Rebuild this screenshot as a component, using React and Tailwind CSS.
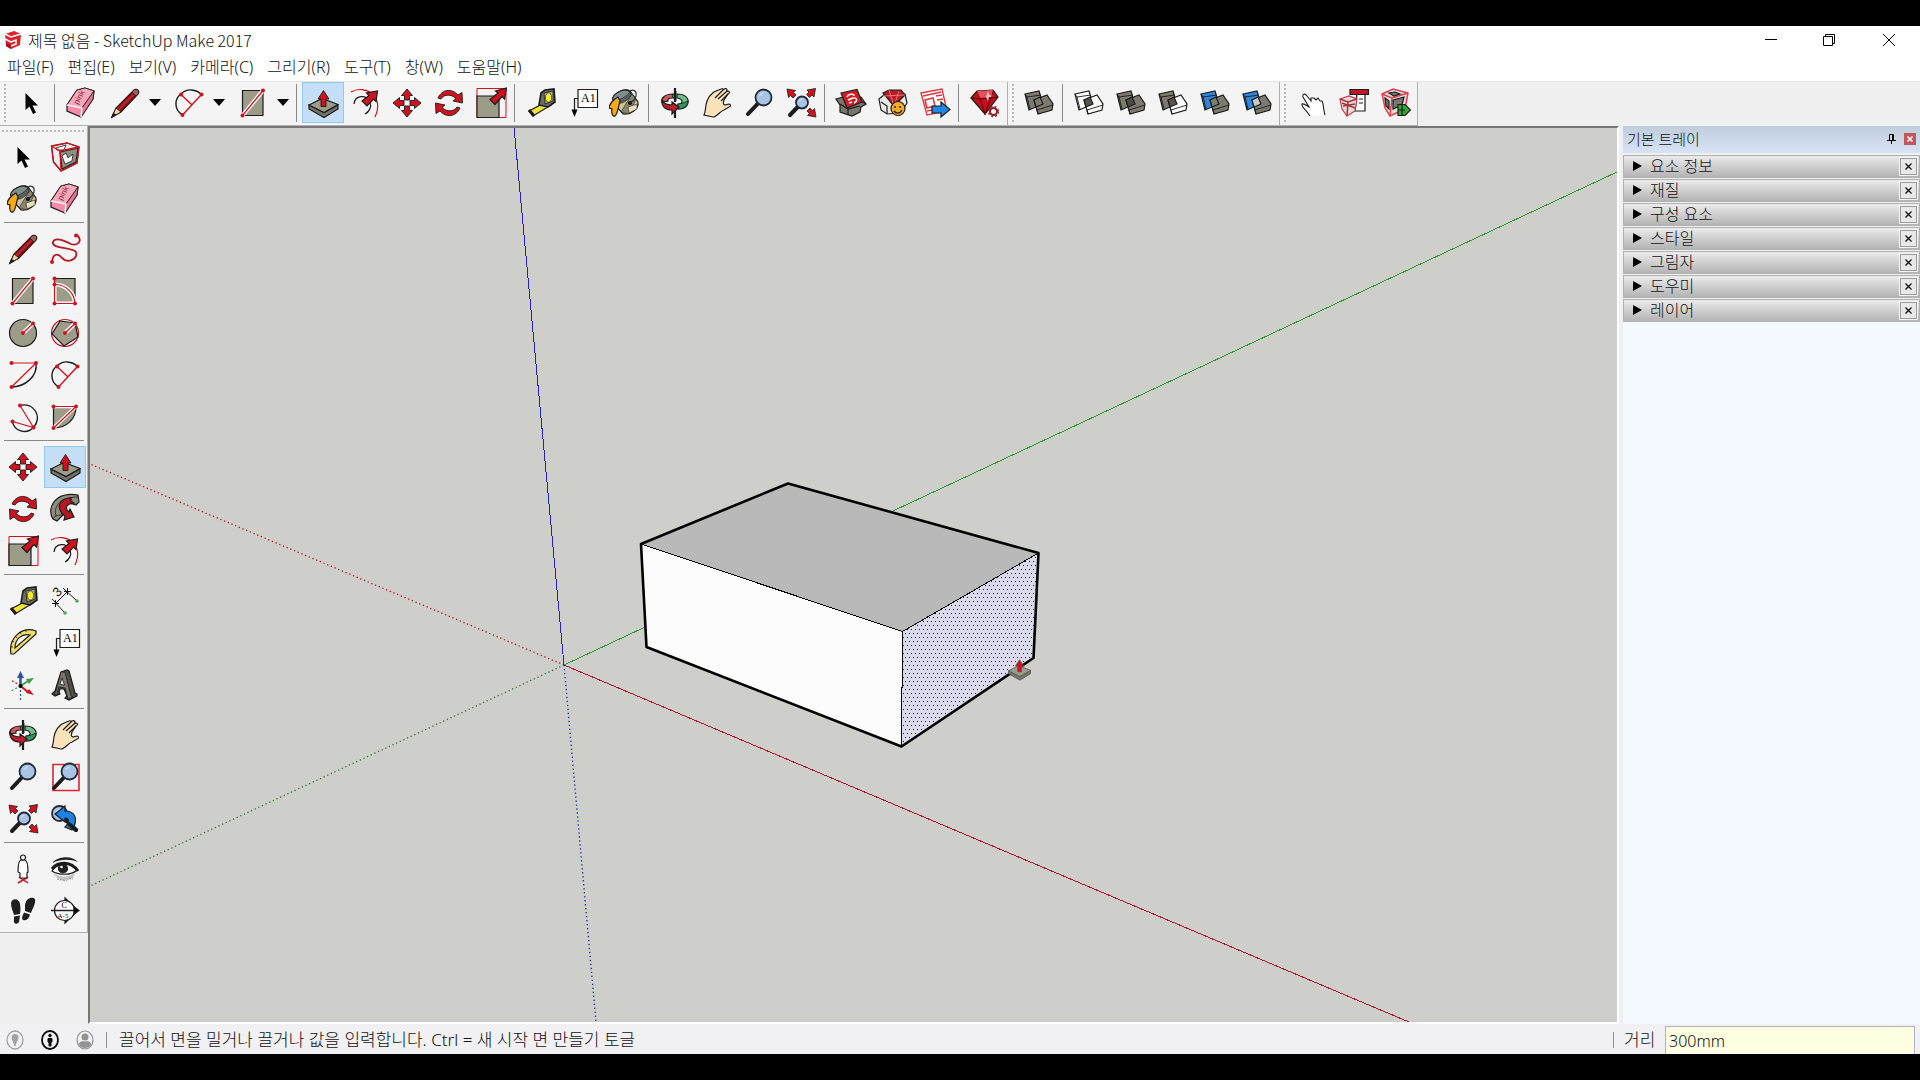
import clsx from 'clsx';

const RED = '#d0121f';
const GRAY = '#9c9c88';
const DARK = '#1c1c1c';

const Svg = ({ children }) => (
  <svg width="32" height="32" viewBox="0 0 32 32" fill="none" stroke={DARK} strokeWidth="1.2" aria-hidden="true" className="shrink-0">
    {children}
  </svg>
);

// Red end points shared by the drawing tools
const Dots = ({ at }) => at.map(([x, y]) => <circle key={`${x}-${y}`} cx={x} cy={y} r="2" fill={RED} stroke="none" />);

const SelectIcon = () => (
  <Svg>
    <path d="M10.5 6V23L14.5 19.5 18 27 21 25.5 17.5 18.5H23Z" fill="#000" stroke="none" />
  </Svg>
);

const ComponentIcon = () => (
  <Svg>
    <path d="M2.5 5 18 2 30 6 28 22 12 30 4.500 21Z" fill="#ececea" />
    <path d="M11 11 29 7 27 21 13 28Z" fill="#8d8d80" />
    <path d="M7 7 17 4 15 9 8 9ZM13 15l4-3 2 5 5-4-1 7-7 3Z" fill="#fff" strokeWidth=".8" />
    <g stroke={RED} strokeWidth="1.3">
      <path d="M2.500 5 18 2 30 6 28 22 12 30 4.500 21ZM2.500 5 11 10 30 6M11 10 12 30" />
    </g>
  </Svg>
);

const BucketIcon = () => (
  <Svg>
    <path d="M4 12C6 5 16 1 21 4L29 15C30 22 22 28 14 27L8 20Z" fill="#cfc3a0" />
    <path d="M12 25 23 7 27 12 20 27Z" fill="#8b8470" strokeWidth=".6" />
    <path d="M19 20 28 17 28 22 20 26Z" fill="#eadfba" strokeWidth=".6" />
    <ellipse cx="12.500" cy="9" rx="9.500" ry="5" transform="rotate(-24 12.500 9)" fill="#7f8e8a" />
    <path d="M5 13C10 14 17 10 21 5L22 8C19 14 12 18 6 16Z" fill="#55605f" strokeWidth=".6" />
    <path d="M20 5C24 1 28 4 27 9 26 13 23 15 21 15" stroke="#333" />
    <path d="M9 10C5 12 0 17 0 21L3 22C2 27 4 30 6 29 9 27 9 20 11 14Z" fill="#f8a915" />
    <circle cx="21" cy="16" r="1.500" fill="#222" />
  </Svg>
);

const EraserIcon = () => (
  <Svg>
    <path d="M12 3 20 1 29 4 28 12 16 30 2 24 2 18Z" fill="#f78aa5" />
    <path d="M2 18 12 3 20 1 29 4 17 21Z" fill="#f9a9bb" strokeWidth=".8" />
    <path d="M17 21 29 4 28 12 16 30Z" fill="#ee7593" strokeWidth=".8" />
    <path d="M2 18 17 21 16 30" stroke="#fff" strokeWidth="1.500" />
    <text x="13" y="18" fontSize="8" fill="#7a2338" stroke="none" transform="rotate(-62 13 18)" fontFamily="Liberation Sans">pink</text>
  </Svg>
);

const PencilIcon = () => (
  <Svg>
    <path d="M3 30 7 21 25 3C28 1 31 4 29 7L12 25Z" fill="#c01c25" />
    <path d="M3 30 7 21 12 25Z" fill="#ecd3a0" strokeWidth=".8" />
    <path d="M3 30 4.500 26.500 6.500 28Z" fill="#000" />
    <path d="M9 20 24 5M11 24 28 7" stroke="#68100f" />
    <path d="M23 5 25 3C28 1 31 4 29 7L27 9Z" fill="#a0605c" strokeWidth=".8" />
  </Svg>
);

const FreehandIcon = () => (
  <Svg>
    <path d="M28 2C35 9 27 13 22 11 14 7 6 4 4 9 2 16 24 14 27 19 29 26 19 31 13 25 9 20 4 20 3 29" stroke="#b41a26" strokeWidth="1.800" />
    <Dots at={[[27, 2.500], [3, 29]]} />
  </Svg>
);

const RectIcon = () => (
  <Svg>
    <path d="M5.500 3.500H26V28.500H5.500Z" fill={GRAY} />
    <path d="M5.500 28.500 26 3.500" stroke="#fff" strokeWidth="4" />
    <path d="M5.500 28.500 26 3.500" stroke={RED} />
    <Dots at={[[5.500, 28.500], [26, 3.500]]} />
  </Svg>
);

const RotRectIcon = () => (
  <Svg>
    <path d="M5.500 3.500H26V28.500H5.500Z" fill={GRAY} />
    <path d="M5.500 9.500C17 9.500 25.500 18 26 28.500H5.500Z" stroke="#fff" strokeWidth="4" />
    <path d="M5.500 3.500V28.500H26C25.500 18 17 9.500 5.500 9.500" stroke={RED} />
    <Dots at={[[5.500, 3.500], [5.500, 9.500], [5.500, 28.500], [26, 28.500]]} />
  </Svg>
);

const CircleIcon = () => (
  <Svg>
    <circle cx="16" cy="16" r="13.500" fill={GRAY} />
    <path d="M16 16 26 6.500" stroke="#fff" strokeWidth="4" />
    <path d="M16 16 26 6.500" stroke={RED} />
    <Dots at={[[16, 16], [26, 6.500]]} />
  </Svg>
);

const PolygonIcon = () => (
  <Svg>
    <circle cx="16" cy="16" r="13.500" stroke={RED} />
    <path d="M11 4 26 6 29 20 15 29 3 17Z" fill={GRAY} />
    <path d="M16 16 26 6.500" stroke="#fff" strokeWidth="4" />
    <path d="M16 16 26 6.500" stroke={RED} />
    <Dots at={[[16, 16], [26, 6.500]]} />
  </Svg>
);

const ArcIcon = () => (
  <Svg>
    <path d="M29 4C31 17 18 28 4.500 28" strokeWidth="1.400" />
    <path d="M4.500 28 29 4H4.500" stroke={RED} />
    <Dots at={[[4.500, 4], [29, 4], [4.500, 28]]} />
  </Svg>
);

const TwoPointArcIcon = () => (
  <Svg>
    <path d="M9.500 28C0 22 2 11 8 7 14 1 23 2 28.500 7.500" strokeWidth="1.400" />
    <path d="M9.500 28 28.500 7.500M8 7.500 18.500 17.500" stroke={RED} strokeWidth="1.400" />
    <Dots at={[[8, 7.500], [28.500, 7.500], [9.500, 28]]} />
  </Svg>
);

const ThreePointArcIcon = () => (
  <Svg>
    <path d="M13 4.500C27 1 36 16 26.500 26.500 19 34 7 30 5.500 20.500" strokeWidth="1.400" />
    <path d="M13 4.500 26.500 26.500 5.500 20.500" stroke={RED} />
    <Dots at={[[13, 4.500], [26.500, 26.500], [5.500, 20.500]]} />
  </Svg>
);

const PieIcon = () => (
  <Svg>
    <path d="M4.500 5.500H27C27 18 18 27 4.500 27Z" fill={GRAY} />
    <path d="M4.500 27 27 5.500H4.500" stroke="#fff" strokeWidth="3.500" />
    <path d="M4.500 27 27 5.500H4.500" stroke={RED} />
    <Dots at={[[4.500, 5.500], [27, 5.500], [4.500, 27]]} />
  </Svg>
);

const MoveIcon = () => (
  <Svg>
    {[0, 90, 180, 270].map((deg) => (
      <path key={deg} d="M16 2 21.500 8.500H18.500V13H13.500V8.500H10.500Z" fill={RED} strokeWidth=".9" transform={`rotate(${deg} 16 16)`} />
    ))}
  </Svg>
);

const Slab = () => (
  <>
    <path d="M2 18 17 25.500 31 18V22L17 30.500 2 22Z" fill="#74746a" />
    <path d="M2 18 15 11.500 31 17.500 17 25.500Z" fill={GRAY} />
    <path d="M16.500 3.500 22 12H19V19.500H14V12H11Z" fill={RED} strokeWidth=".9" />
  </>
);

const PushPullIcon = () => (
  <Svg>
    <Slab />
  </Svg>
);

const RotateIcon = () => (
  <Svg>
    {[0, 180].map((deg) => (
      <path key={deg} d="M5 11C9 2 19 1 25 8L29 5.500 29.500 16 20 14 23 11.500C17 6 10 8 8 12Z" fill={RED} strokeWidth=".9" transform={`rotate(${deg} 16 16)`} />
    ))}
  </Svg>
);

const FollowMeIcon = () => (
  <Svg>
    <path d="M4 26C0 20 1 11 9 5 15 1 23 1 29 2L30 9 27 12C18 8 12 12 12 17L14 22 8 28Z" fill="#8d8d80" />
    <path d="M4 26C6 22 10 22 14 22M7 23C4 13 12 4 29 4" strokeWidth=".8" />
    <path d="M22 5C12 5 9 11 11 17 12 20 14 22 16 23L15 27 25 24 21 16 20 19C16 16 16 11 25 10L22 8Z" fill="#b81820" />
  </Svg>
);

const ScaleIcon = () => (
  <Svg>
    <path d="M2 1.500H31V30.500H2Z" stroke={RED} strokeWidth="1" />
    <path d="M2 9H24V30.500H2Z" fill={GRAY} />
    <path d="M31.500 1 29.500 12 27 9.500 20 17.500 15 12.500 23 6 20.500 4Z" fill={RED} />
  </Svg>
);

const OffsetIcon = () => (
  <Svg>
    <path d="M2 5C16-3 36 9 26 30" stroke={RED} />
    <path d="M5 17C6 8 17 7 21 15 23 20 20 25 16 27" />
    <path d="M28.500 4 27 14.500 24.500 12 18 19 13 14 20 8.500 17.500 6Z" fill={RED} />
  </Svg>
);

const TapeIcon = () => (
  <Svg>
    <path d="M21 15 26 18 8 29 4 24Z" fill="#f1e233" />
    <path d="M4 23 9 29" strokeWidth="3" />
    <path d="M16 6 20 3 29 2 30 15 23 20 14 18Z" fill="#6d6d62" strokeWidth="1.600" />
    <path d="M19 6 28 4 28 14 20 17Z" fill="#aaa99c" strokeWidth=".8" />
    <ellipse cx="23.500" cy="10.500" rx="3" ry="4.500" fill="#f5ec2e" strokeWidth=".6" />
  </Svg>
);

const DimensionIcon = () => (
  <Svg>
    <path d="M6.500 18.500 18.500 6.500M14 3 28 16M3 14 16 28M3 18.500H10M6.500 15V22M15 6.500H22M18.500 3V10" strokeWidth="1" />
    <text x="6" y="12" fontSize="13" fill={DARK} stroke="none" transform="rotate(-45 8 9)" fontFamily="Liberation Sans">3</text>
    <circle cx="28" cy="16" r="1.800" fill="#53a953" stroke="none" />
    <circle cx="16" cy="28" r="1.800" fill="#53a953" stroke="none" />
  </Svg>
);

const ProtractorIcon = () => (
  <Svg>
    <path d="M29 4C15-1 1 11 4 27L7 27 29 7Z" fill="#f0dd62" />
    <path d="M23 8C15 6 8 12 8 21Z" fill="#f3f3f3" />
    <path d="M19 3 19 5M13 5 14 7M8 9 10 11M5 14 7 15M4 20H6" strokeWidth=".8" />
  </Svg>
);

const TextIcon = () => (
  <Svg>
    <path d="M11 2.500H30.500V20.500H11Z" fill="#fff" />
    <path d="M11 11.500H7.500V24" />
    <path d="M4.500 22.500H10.500L7.500 30Z" fill="#000" stroke="none" />
    <text x="14" y="15" fontSize="12" fill="#000" stroke="none" fontFamily="Liberation Serif">A1</text>
  </Svg>
);

const AxesIcon = () => (
  <Svg>
    <path d="M13.500 17V31" stroke="#2c53a6" strokeDasharray="2 2" />
    <path d="M13.500 17 4 22" stroke="#3f9c4a" strokeDasharray="2 2" />
    <path d="M13.500 17 4 11" stroke={RED} strokeDasharray="2 2" />
    <path d="M13.500 17V8" stroke="#2c53a6" strokeWidth="2.500" />
    <path d="M13.500 2 17 9H10Z" fill="#2c53a6" stroke="none" />
    <path d="M13.500 17 21 12" stroke="#3f9c4a" strokeWidth="2" />
    <path d="M27 9 22 15 19 10Z" fill="#3f9c4a" stroke="none" />
    <path d="M13.500 17 21 23" stroke={RED} strokeWidth="2" />
    <path d="M27 26 19 24 22 20Z" fill={RED} stroke="none" />
    <circle cx="13.500" cy="17" r="2" fill="#000" stroke="none" />
  </Svg>
);

const Text3dIcon = () => (
  <Svg>
    <path d="M12 3 18 1 20 2 26 24 28 25 28 27 20 31 16 29 18 27 15 20H11L10 23 11 25 6 27 3 25 6 22Z" fill="#4d4d49" />
    <path d="M12 3 16 3 22 27 24 28 19 30 18 26 16 19 10 18 8 24 9 25 5 26 7 22Z" fill="#77776f" strokeWidth=".8" />
    <path d="M13 9 15.500 16 11 15.500Z" fill="#f3f3f3" strokeWidth=".8" />
  </Svg>
);

const OrbitIcon = () => (
  <Svg>
    <path d="M14 7C6 7 2 11 3 15L9 14C8 12 10 11 14 11Z" fill="#d05660" />
    <path d="M17 4 17 14 13 9Z" fill="#3c9f5e" strokeWidth=".8" />
    <path d="M18 7C26 7 30 11 29 16 28 20 24 22 19 22V17C24 17 25 12 18 11Z" fill="#6bc08a" />
    <path d="M29 14C29 19 24 22 19 22V17C23 17 26 15 29 14Z" fill="#2f9757" strokeWidth=".8" />
    <path d="M3 12C3 16 8 18 13 18V15L20 20 13 27V23C7 23 2 20 3 12Z" fill="#c31c2b" />
    <path d="M16 1V15M16 24V31" strokeWidth="2.200" />
  </Svg>
);

const PanIcon = () => (
  <Svg>
    <path
      d="M3 28C5 24 4 20 6 14 8 8 11 7 13 5L20 2C22 1 23 3 21 4L23 2C26 1 27 3 25 5L27 4C29 4 29 6 27 7L23 13C22 17 22 17 24 18L28 17C30 17 30 20 28 20L23 23C19 24 16 30 12 30Z"
      fill="#fbe2b9"
    />
    <path d="M21 4 14 11M25 5 17 12M27 7 20 14" />
  </Svg>
);

const Lens = ({ cx, cy, r, hx, hy }) => (
  <>
    <path d={`M${cx} ${cy}L${hx} ${hy}`} stroke="#1d1d1d" strokeWidth="4" strokeLinecap="round" />
    <circle cx={cx} cy={cy} r={r} fill="#a9c3e4" stroke="#202938" strokeWidth="1.800" />
    <path d={`M${cx - r / 2} ${cy - r / 4}L${cx} ${cy - r / 1.6}`} stroke="#cfdef2" strokeWidth="1.500" />
  </>
);

const ZoomIcon = () => (
  <Svg>
    <Lens cx={20.5} cy={10.5} r={8} hx={5} hy={27} />
  </Svg>
);

const ZoomWindowIcon = () => (
  <Svg>
    <path d="M4 3.500H30V29.500H4Z" stroke="#de2630" strokeWidth="1.600" />
    <Lens cx={20.5} cy={10.5} r={8} hx={5} hy={27} />
  </Svg>
);

const ExtentsIcon = () => (
  <Svg>
    {[0, 90, 180].map((deg) => (
      <path key={deg} d="M2 2 10.500 3.500 8.500 5.500 11 8 8 11 5.500 8.500 3.500 10.500Z" fill={RED} strokeWidth=".8" transform={`rotate(${deg} 16.500 16)`} />
    ))}
    <Lens cx={17} cy={15.5} r={6} hx={5} hy={28} />
  </Svg>
);

const PreviousIcon = () => (
  <Svg>
    <Lens cx={10.5} cy={10.5} r={7.5} hx={27} hy={27} />
    <path d="M6 11 16 3V8C26 8 30 16 23 27L16 24C21 19 20 15 16 15V19Z" fill="#1a82e2" />
    <path d="M20 21 27 27" strokeWidth="4" strokeLinecap="round" />
  </Svg>
);

const PersonIcon = () => (
  <Svg>
    <path d="M12 24 21 30M21 24 11 30" stroke={RED} strokeWidth="1.500" />
    <path d="M14 7C11 8 11 14 11 19L13 20V25H20V20L21 19C21 14 21 8 18 7Z" fill="#fff" />
    <circle cx="16" cy="4.500" r="2.500" fill="#fff" />
  </Svg>
);

const EyeIcon = () => (
  <Svg>
    <path d="M4 20C10 25 22 25 27 18L24 25C18 29 8 28 4 20Z" fill="#c4c4c4" stroke="none" />
    <path d="M3 10C9 3 23 2 29 9 21 6 12 6 3 10Z" fill="#222" stroke="none" />
    <path d="M3 18C8 10 21 8 28 17 22 23 9 22 3 18Z" fill="#fff" />
    <path d="M3 16C9 8 22 8 29 18" strokeWidth="3" />
    <circle cx="14" cy="15.500" r="4.500" fill="#222" />
    <circle cx="12.500" cy="14" r="1.300" fill="#fff" stroke="none" />
    <path d="M8 26 18 28M20 25 24 26" stroke="#999" strokeDasharray="2 1" />
  </Svg>
);

const FeetIcon = () => (
  <Svg>
    {['M4 8C5 3 12 3 13 9 14 14 13 17 13 19L7 20C6 16 4 13 4 8Z', 'M18 10C19 3 25 1 28 4 29 9 25 14 24 18L18 16Z'].map((d) => (
      <path key={d} d={d} fill="#1e1e1e" stroke="none" />
    ))}
    <path d="M7 21.500 13 20.500 12 27C10 30 6 29 7 25ZM17 17.500 23 19.500C22 24 19 26 16 25 14 23 16 20 17 17.500Z" fill="#1e1e1e" stroke="none" />
  </Svg>
);

const SectionIcon = () => (
  <Svg>
    <path d="M16 3 29 15.500 16 28Z" fill="#000" />
    <circle cx="15.500" cy="15.500" r="10" fill="#fff" />
    <path d="M2 15.500H29" strokeWidth="1.500" />
    <path d="M25 12 30 15.500 25 19Z" fill="#000" />
    <text x="12.500" y="13" fontSize="8" fill="#000" stroke="none" fontFamily="Liberation Serif">C</text>
    <text x="8.500" y="22.500" fontSize="7" fill="#000" stroke="none" fontFamily="Liberation Serif">A-5</text>
  </Svg>
);

const WarehouseIcon = () => (
  <Svg>
    <path d="M1 12 8 10 26 10 31 17 26 20 25 25 17 29 5 25 5 18Z" fill="#77776f" />
    <path d="M5 17 13 22 25 19M13 22V28M26 14 31 17" />
    <path d="M6 6 22 2.500 27 15 12 21Z" fill="#d21d27" />
    <path d="M12 10C13 7 19 6 19 9M13 13 18 11C22 10 23 14 19 16M14 16 17 15" stroke="#fff" strokeWidth="1.400" />
  </Svg>
);

const ExtensionIcon = () => (
  <Svg>
    <path d="M2 12 8 7 28 7 30 16 24 26 10 27 4 23Z" fill="#e9e9e6" />
    <path d="M6 6 12 3H24L28 8 17 19Z" fill="#bd1a24" />
    <path d="M6 9 28 8M12 3 17 19 22 4" stroke="#f18c8c" strokeWidth=".8" />
    <path d="M4 15 10 19V27" />
    <circle cx="21" cy="21.500" r="7" fill="#f6ab23" />
    <path d="M18 19V21M23 19V21M17 24C19 27 23 27 25 23" strokeWidth="1.400" />
  </Svg>
);

const SendIcon = () => (
  <Svg>
    <path d="M2 6 23 2 28 24 8 28Z" fill="#fff" stroke="#e13740" strokeWidth="1.400" />
    <path d="M4 9 22 5M6 13 14 11 16 19 8 21ZM17 9 23 8M18 13 24 12M8 24 18 22" stroke="#e13740" strokeWidth="1.600" />
    <path d="M13 19H22V15L31 22.500 22 30V26H13Z" fill="#1e88e5" />
  </Svg>
);

const RubyIcon = () => (
  <Svg>
    <path d="M2 11 8 4 24 3 29 10 16 27Z" fill="#c4101d" />
    <path d="M8 4 11 12 16 27 22 11 24 3" stroke="#6d0009" />
    <path d="M8 4 11 11 22 10 24 3Z" fill="#e55058" stroke="none" />
    <path d="M2 11 11 12 22 11 29 10" stroke="#5b0007" />
    <path d="M19 4 20 8 24 9 20 10 19 14 17 10Z" fill="#fff" stroke="none" opacity=".7" />
    <circle cx="24.500" cy="24.500" r="3.500" fill="#f3f3f3" stroke="#8f1c26" strokeWidth="2" />
    <circle cx="24.500" cy="24.500" r="5" stroke="#8f1c26" strokeWidth="1.400" strokeDasharray="2 2" />
  </Svg>
);

// Two overlapping blocks; each solid tool only changes the fills
const Solid = ({ back, front, overlap }) => (
  <Svg>
    <path d="M2 7 16 4 20 17 6 23Z" fill={back} />
    <path d="M2 7 4 10 18 8M4 10 7 22" strokeWidth=".9" />
    <path d="M11 13 24 8 30 17 29 23 15 27Z" fill={front} />
    <path d="M14 23 30 18M14 23 15 27" strokeWidth=".9" />
    <path d="M11 13 17 10 20 17 13 20Z" fill={overlap} />
  </Svg>
);

const S = '#7b7b70';
const OuterShellIcon = () => <Solid back={S} front={S} overlap={S} />;
const IntersectIcon = () => <Solid back="#fff" front="#fff" overlap="#55554e" />;
const UnionIcon = () => <Solid back={S} front={S} overlap="#4b4b45" />;
const SubtractIcon = () => <Solid back={S} front="#fff" overlap="#55554e" />;
const TrimIcon = () => <Solid back="#2f86dd" front={S} overlap={S} />;
const SplitIcon = () => <Solid back="#2f86dd" front={S} overlap="#c9c9c6" />;

const PointerHandIcon = () => (
  <Svg>
    <path
      d="M15 29C11 22 6 20 7 17 9 16 12 19 14 20L8 10C7 7 10 6 12 9L16 14 16 11 19 11 21 13 23 11 25 14 27 14C29 17 28 22 30 28"
      fill="#fff"
      strokeWidth="1.1"
    />
  </Svg>
);

const ClassifierIcon = () => (
  <Svg>
    <path d="M13 2.500H31.500V7.500H13Z" fill="#c51622" />
    <path d="M20 7.500H28V24H18Z" fill="#fff" />
    <path d="M22 12H26M22 16H26" />
    <path d="M3 12 12 9 20 12 18 24 10 29 5 22Z" fill="#e4dcda" stroke="#c73942" />
    <path d="M3 12 11 15 20 12M11 15 10 29M6 19 18 17M5 16 18 21" stroke="#a8323a" strokeWidth="1.500" />
  </Svg>
);

const PublishIcon = () => (
  <Svg>
    <path d="M3 7 14 2 29 6 26 22 11 29 6 21Z" fill="#e4dcda" stroke="#e0414a" strokeWidth="1.500" />
    <path d="M3 7 13 11 29 6M13 11 11 29" stroke="#e0414a" strokeWidth="1.500" />
    <path d="M14 13 25 10 23 18 14 22ZM6 11 10 14V22L7 19ZM10 6 16 5 21 7 15 9Z" fill="#77776f" />
    <path d="M19 17.500H26L31.500 23 26 28.500H19Z" fill="#31a63a" />
    <path d="M19 23H26M23 17.500V28.500" />
  </Svg>
);

const SEP = { sep: true };

const toolbarGroups = [
  [
    { label: '선택', icon: SelectIcon },
    SEP,
    { label: '지우개', icon: EraserIcon },
    { label: '선', icon: PencilIcon, menu: true },
    { label: '호', icon: TwoPointArcIcon, menu: true },
    { label: '직사각형', icon: RectIcon, menu: true },
    SEP,
    { label: '밀기/끌기', icon: PushPullIcon, active: true },
    { label: '오프셋', icon: OffsetIcon },
    { label: '이동', icon: MoveIcon },
    { label: '회전', icon: RotateIcon },
    { label: '배율', icon: ScaleIcon },
    SEP,
    { label: '줄자', icon: TapeIcon },
    { label: '텍스트', icon: TextIcon },
    { label: '페인트통', icon: BucketIcon },
    SEP,
    { label: '궤도', icon: OrbitIcon },
    { label: '이동 보기', icon: PanIcon },
    { label: '확대/축소', icon: ZoomIcon },
    { label: '범위 확대', icon: ExtentsIcon },
    SEP,
    { label: '3D Warehouse', icon: WarehouseIcon },
    { label: 'Extension Warehouse', icon: ExtensionIcon },
    { label: 'LayOut', icon: SendIcon },
    SEP,
    { label: '확장 관리자', icon: RubyIcon },
  ],
  [
    { label: '외피', icon: OuterShellIcon },
    SEP,
    { label: '교차', icon: IntersectIcon },
    { label: '결합', icon: UnionIcon },
    { label: '빼기', icon: SubtractIcon },
    { label: '자르기', icon: TrimIcon },
    { label: '분할', icon: SplitIcon },
  ],
  [
    { label: '상호작용', icon: PointerHandIcon },
    { label: '구성 요소 옵션', icon: ClassifierIcon },
    { label: '구성 요소 속성', icon: PublishIcon },
  ],
];

const sideGroups = [
  [
    { label: '선택', icon: SelectIcon },
    { label: '구성 요소 만들기', icon: ComponentIcon },
    { label: '페인트통', icon: BucketIcon },
    { label: '지우개', icon: EraserIcon },
  ],
  [
    { label: '선', icon: PencilIcon },
    { label: '자유형', icon: FreehandIcon },
    { label: '직사각형', icon: RectIcon },
    { label: '회전 직사각형', icon: RotRectIcon },
    { label: '원', icon: CircleIcon },
    { label: '다각형', icon: PolygonIcon },
    { label: '호', icon: ArcIcon },
    { label: '2점 호', icon: TwoPointArcIcon },
    { label: '3점 호', icon: ThreePointArcIcon },
    { label: '파이', icon: PieIcon },
  ],
  [
    { label: '이동', icon: MoveIcon },
    { label: '밀기/끌기', icon: PushPullIcon, active: true },
    { label: '회전', icon: RotateIcon },
    { label: '따라가기', icon: FollowMeIcon },
    { label: '배율', icon: ScaleIcon },
    { label: '오프셋', icon: OffsetIcon },
  ],
  [
    { label: '줄자', icon: TapeIcon },
    { label: '치수', icon: DimensionIcon },
    { label: '각도기', icon: ProtractorIcon },
    { label: '텍스트', icon: TextIcon },
    { label: '축', icon: AxesIcon },
    { label: '3D 텍스트', icon: Text3dIcon },
  ],
  [
    { label: '궤도', icon: OrbitIcon },
    { label: '이동 보기', icon: PanIcon },
    { label: '확대/축소', icon: ZoomIcon },
    { label: '창 확대', icon: ZoomWindowIcon },
    { label: '범위 확대', icon: ExtentsIcon },
    { label: '이전', icon: PreviousIcon },
  ],
  [
    { label: '카메라 배치', icon: PersonIcon },
    { label: '둘러보기', icon: EyeIcon },
    { label: '걷기', icon: FeetIcon },
    { label: '단면', icon: SectionIcon },
  ],
];

const menus = ['파일(F)', '편집(E)', '보기(V)', '카메라(C)', '그리기(R)', '도구(T)', '창(W)', '도움말(H)'];
const trays = ['요소 정보', '재질', '구성 요소', '스타일', '그림자', '도우미', '레이어'];

const ToolButton = ({ tool, className }) => {
  const Icon = tool.icon;
  return (
    <button
      type="button"
      aria-label={tool.label}
      className={clsx(
        'flex w-[42px] shrink-0 items-center justify-center border',
        tool.active ? 'border-[#90c8f6] bg-[#c5dff7]' : 'border-transparent',
        tool.menu && 'pl-1',
        className
      )}
    >
      <Icon />
    </button>
  );
};

const TitleBar = () => (
  <header className="flex h-7 shrink-0 items-center bg-white pl-1">
    <svg width="18" height="18" viewBox="0 0 18 18" aria-hidden="true">
      <path d="M1 3 10 0 17 3 16 14 7 18 2 15Z" fill="#e0202b" />
      <path d="M1 3 7 6 17 3M7 11 1 8M7 11 12 9V13L7 15" fill="none" stroke="#fff" strokeWidth="1.500" />
      <path d="M2 15 7 18V14L2 12Z" fill="#a90f19" />
    </svg>
    <h1 className="ml-1.5 font-['Noto_Sans_CJK_KR',sans-serif] text-base leading-7">제목 없음 - SketchUp Make 2017</h1>
    <div className="ml-auto flex h-full">
      <button type="button" aria-label="최소화" className="flex w-[58px] items-center justify-center">
        <svg width="12" height="12" viewBox="0 0 12 12"><path d="M0 5.500H12" stroke="#000" /></svg>
      </button>
      <button type="button" aria-label="이전 크기로 복원" className="flex w-[58px] items-center justify-center">
        <svg width="12" height="12" viewBox="0 0 12 12" fill="none" stroke="#000">
          <path d="M.5 2.500H9.500V11.500H.5ZM2.500 2.500V.5H11.500V9.500H9.500" />
        </svg>
      </button>
      <button type="button" aria-label="닫기" className="flex w-[62px] items-center justify-center">
        <svg width="12" height="12" viewBox="0 0 12 12" stroke="#000"><path d="M0 0 12 12M12 0 0 12" /></svg>
      </button>
    </div>
  </header>
);

const TopToolbar = () => (
  <div className="flex h-[45px] shrink-0 border-t border-[#e6e6e6] bg-[#f0f0f0]">
    {toolbarGroups.map((group, i) => (
      <div key={i} className="flex items-start border-r border-b border-[#b0b0b0] bg-[#f4f4f4] pr-px">
        <div className="mx-1 mt-0.5 h-[38px] w-0.5 shrink-0 border-l-2 border-dotted border-[#b8b8b8]" />
        {group.map((tool, j) =>
          tool.sep ? (
            <div key={j} className="mt-0.5 mr-[5px] ml-0.5 h-[38px] w-px bg-[#8a8a8a]" />
          ) : (
            <div key={j} className="flex">
              <ToolButton tool={tool} className="h-[41px]" />
              {tool.menu && (
                <button type="button" aria-label={`${tool.label} 목록`} className="flex w-[22px] items-center justify-center">
                  <svg width="12" height="7" viewBox="0 0 12 7"><path d="M0 0H12L6 7Z" /></svg>
                </button>
              )}
            </div>
          )
        )}
      </div>
    ))}
  </div>
);

const SideToolbar = () => (
  <aside className="w-[88px] shrink-0 bg-[#f0f0f0]">
    <div className="border-r border-b border-[#b0b0b0] bg-[#f4f4f4] pl-0.5">
      <div className="flex h-2.5 items-center">
        <div className="w-[82px] border-t-2 border-dotted border-[#b8b8b8]" />
      </div>
      {sideGroups.map((group, i) => (
        <div key={i}>
          {i > 0 && <div className="mt-0.5 mb-[5px] ml-0.5 h-px w-20 bg-[#8a8a8a]" />}
          <div className="grid w-[84px] grid-cols-2">
            {group.map((tool) => (
              <ToolButton key={tool.label} tool={tool} className="h-[42px]" />
            ))}
          </div>
        </div>
      ))}
    </div>
  </aside>
);

const Viewport = () => (
  <main className="relative min-w-0 flex-1 border-2 border-t-[#77777a] border-r-white border-b-white border-l-[#77777a] bg-[#cececa]">
    <svg className="absolute inset-0 h-full w-full" viewBox="90 128 1527 894" preserveAspectRatio="xMinYMin slice" fill="none">
      <defs>
        <pattern id="picked" width="4" height="8" patternUnits="userSpaceOnUse">
          <rect width="4" height="8" fill="#dadae8" />
          <rect x="1" y="1" width="1" height="1" fill="#14145a" />
          <rect x="3" y="5" width="1" height="1" fill="#14145a" />
        </pattern>
      </defs>
      <g shapeRendering="crispEdges">
        <path d="M564 665 514 127" stroke="#2323b4" />
        <path d="M564 665 1617 172" stroke="#2f9a2f" />
        <path d="M564 665 1409 1022" stroke="#b3122c" />
      </g>
      <g strokeWidth="1.3" strokeDasharray="1.3 2.7">
        <path d="M564 665 596 1022" stroke="#1c1ca0" />
        <path d="M564 665 90 886" stroke="#3c6e3c" />
        <path d="M564 665 90 464" stroke="#b80f28" />
      </g>
      <path d="M641 544 788 483.500 1038.500 553 902.500 631.500Z" fill="#b9b9b9" />
      <path d="M641 544 902.500 631.500 901.500 746.500 646.500 647Z" fill="#fcfcfc" />
      <path d="M902.500 631.500 1038.500 553 1033.500 658 901.500 746.500Z" fill="url(#picked)" shapeRendering="crispEdges" />
      <path d="M641 544 902.500 631.500 1038.500 553M902.500 631.500 901.500 746.500" stroke="#000" shapeRendering="crispEdges" />
      <path d="M641 544 788 483.500 1038.500 553 1033.500 658 901.500 746.500 646.500 647Z" stroke="#000" strokeWidth="2.600" strokeLinejoin="round" />
      <g transform="translate(1007 657) scale(.76)" stroke="#555" strokeWidth="1">
        <Slab />
      </g>
    </svg>
  </main>
);

const Tray = () => (
  <aside className="ml-1 flex w-[297px] shrink-0 flex-col bg-[#f4f8ff]">
    <div className="flex h-[27px] items-center bg-linear-to-b from-[#bfcddd] to-[#d8e3f4] pr-1 pb-0.5 pl-1">
      <h2 className="flex-1 text-[15px] leading-6">기본 트레이</h2>
      <button type="button" aria-label="자동 숨기기" className="mr-2">
        <svg width="9" height="10" viewBox="0 0 9 10" stroke="#000" fill="none">
          <path d="M2.500 6V.5H6.500V6M5.500 1V6M0 6.500H9M4.500 7V10" />
        </svg>
      </button>
      <button type="button" aria-label="트레이 닫기" className="flex h-3 w-3 items-center justify-center bg-[#c4555a]">
        <svg width="6" height="6" viewBox="0 0 6 6" stroke="#fff" strokeWidth="1.500"><path d="M.5 .5 5.500 5.500M5.500 .5.5 5.500" /></svg>
      </button>
    </div>
    <ul className="flex flex-col gap-px bg-[#f0f0f0] pt-0.5">
      {trays.map((name) => (
        <li key={name} className="flex h-[23px] items-center border border-[#b2b2b2] bg-linear-to-b from-[#ececec] to-[#b4b4b4] pr-0.5">
          <button type="button" className="flex flex-1 items-center pb-0.5 pl-[9px] text-left text-base leading-5">
            <svg width="9" height="10" viewBox="0 0 9 10" className="mr-2"><path d="M0 0 9 5 0 10Z" /></svg>
            {name}
          </button>
          <button type="button" aria-label={`${name} 닫기`} className="flex h-[17px] w-[17px] items-center justify-center border border-[#9c9c9c] bg-[#e8e8e8] outline-1 outline-[#f4f4f4]">
            <svg width="7" height="7" viewBox="0 0 7 7" stroke="#111" strokeWidth="1.300"><path d="M.5 .5 6.500 6.500M6.500 .5.5 6.500" /></svg>
          </button>
        </li>
      ))}
    </ul>
  </aside>
);

const StatusBar = () => (
  <footer className="flex h-[30px] shrink-0 items-center overflow-hidden bg-[#f1f0f2] pt-0.5 pr-[5px] pl-1.5">
    <div className="flex gap-[17px]">
      <button type="button" aria-label="지리 위치">
        <svg width="18" height="20" viewBox="0 0 18 20" fill="none" stroke="#a2a2a2">
          <ellipse cx="9" cy="10" rx="8" ry="9" strokeWidth="1.300" />
          <path d="M9 16C8 12 6 10 6 7.500A3 3 0 0 1 12 7.500C12 10 10 12 9 16Z" fill="#a2a2a2" />
        </svg>
      </button>
      <button type="button" aria-label="저작자">
        <svg width="18" height="20" viewBox="0 0 18 20" fill="none" stroke="#0a0a0a">
          <ellipse cx="9" cy="10" rx="8" ry="9" strokeWidth="1.800" />
          <circle cx="9" cy="5.500" r="1.300" fill="#0a0a0a" />
          <path d="M7 8.500H11V12H10V16H8V12H7Z" fill="#0a0a0a" />
        </svg>
      </button>
      <button type="button" aria-label="로그인">
        <svg width="18" height="20" viewBox="0 0 18 20" fill="#929292">
          <ellipse cx="9" cy="10" rx="8" ry="9" fill="none" stroke="#929292" strokeWidth="1.200" />
          <circle cx="9" cy="7" r="3.500" />
          <path d="M3 15C3 11 6 11 9 11.500 12 11 15 11 15 15 12 19 6 19 3 15Z" />
        </svg>
      </button>
    </div>
    <div className="mx-3 h-4 w-px bg-[#8f8f8f]" />
    <p className="flex-1 text-[17px] leading-6">끌어서 면을 밀거나 끌거나 값을 입력합니다. Ctrl = 새 시작 면 만들기 토글</p>
    <div className="mr-2.5 h-4 w-px bg-[#8f8f8f]" />
    <label htmlFor="measure" className="w-[41px] text-[17px] leading-6">거리</label>
    <input
      id="measure"
      defaultValue="300mm"
      className="h-7 w-[250px] border border-b-0 border-[#aeb2c2] bg-[#ffffe1] px-[3px] text-base outline-none"
    />
  </footer>
);

const App = () => (
  <div className="flex h-screen flex-col bg-black py-[26px] font-['Noto_Sans','Noto_Sans_CJK_KR',sans-serif] font-light text-[#111]">
    <TitleBar />
    <nav className="flex h-[27px] shrink-0 items-center bg-white pb-0.5">
      {menus.map((name) => (
        <button key={name} type="button" className="px-[7px] text-base leading-6 whitespace-nowrap">
          {name}
        </button>
      ))}
    </nav>
    <TopToolbar />
    <div className="flex min-h-0 flex-1 bg-[#f0f0f0]">
      <SideToolbar />
      <Viewport />
      <Tray />
    </div>
    <StatusBar />
  </div>
);

export default App;
